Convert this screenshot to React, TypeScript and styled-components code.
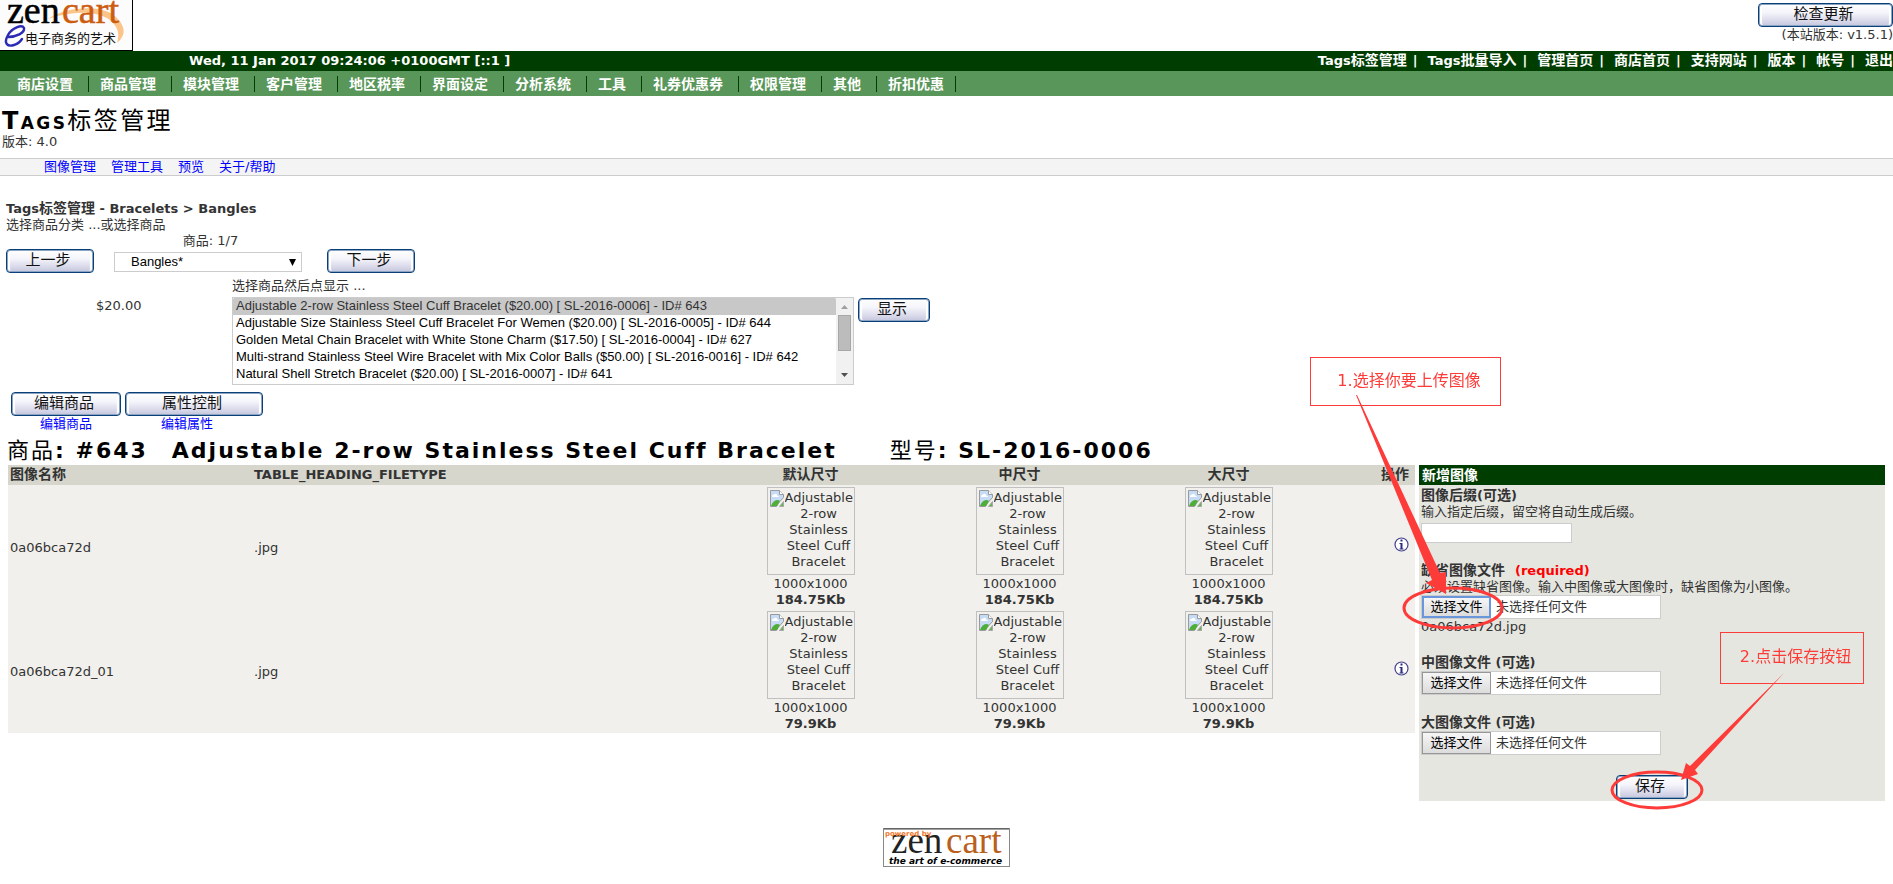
import React from 'react';
import styled, { createGlobalStyle } from 'styled-components';

const GlobalStyle = createGlobalStyle`
  * { box-sizing: border-box; }
  body {
    margin: 0;
    background: #fff;
    color: #333;
    font: 13px/16px "DejaVu Sans", "Noto Sans CJK SC", sans-serif;
  }
  a { color: #00f; text-decoration: none; }
`;

const Page = styled.div`
  position: relative;
  min-width: 1200px;
  overflow: hidden;
`;

const Header = styled.header`
  display: flex;
  justify-content: space-between;
  height: 51px;
`;

const Updates = styled.div`
  display: flex;
  flex-direction: column;
  align-items: flex-end;
  padding-top: 3px;
  white-space: nowrap;
`;

const ImageButton = styled.button<{ $width: number }>`
  width: ${p => p.$width}px;
  height: 24px;
  padding: 0 4px 2px 0;
  border: 1px solid #0b3f78;
  border-radius: 4px;
  background: linear-gradient(#fff 0%, #f4f4fb 40%, #d2d2e6 85%, #c4c4dc 100%);
  box-shadow: inset 0 0 0 1px #8aa4c4, inset 3px 0 1px #fff, inset -3px 0 1px #fff;
  color: #111;
  font: 15px/18px "DejaVu Sans", "Noto Sans CJK SC", sans-serif;
  white-space: nowrap;
`;

const InfoBar = styled.div`
  display: flex;
  justify-content: space-between;
  height: 20px;
  padding-left: 189px;
  background: #003d00;
  color: #fff;
  font-weight: bold;
  line-height: 20px;
  white-space: nowrap;
`;

const QuickNav = styled.nav`
  display: flex;
  gap: 10px;

  a { color: #fff; margin-right: 6px; }
  span:last-child > a { margin-right: 0; }
`;

const Han = styled.span`
  font-size: 14px;
  line-height: 1;
`;

const MenuBar = styled.nav`
  display: flex;
  align-items: center;
  height: 25px;
  padding-left: 6px;
  background: #599659;

  a {
    padding: 0 15px 0 11px;
    border-right: 1px solid #003d00;
    color: #fff;
    font-size: 14px;
    font-weight: bold;
  }
  a:last-child { padding-right: 11px; }
`;

const PageTitle = styled.h1`
  margin: 13px 0 0 2px;
  color: #000;
  font-size: 24px;
  font-variant: small-caps;
  letter-spacing: 0.1em;
  line-height: 25px;

  span { font-weight: normal; }
`;

const Version = styled.p`
  margin: 0 0 8px 2px;
`;

const SubMenu = styled.nav`
  display: flex;
  gap: 15px;
  height: 18px;
  padding-left: 44px;
  border: solid #ccc;
  border-width: 1px 0;
  background: #f4f4f4;
`;

const Picker = styled.section`
  padding: 25px 6px 0;
`;

const Crumb = styled.h2`
  margin: 0;
  font-size: 13px;
  line-height: 16px;
`;

const Line = styled.p`
  margin: 0;
`;

const Counter = styled.p`
  width: 409px;
  margin: 0;
  text-align: center;
`;

const StepRow = styled.div`
  display: flex;
  align-items: center;
  width: 409px;
  height: 24px;
  justify-content: space-between;
`;

const SelectBox = styled.div`
  position: relative;
  margin: 2px 5px 0 0;

  svg { position: absolute; right: 6px; top: 7px; pointer-events: none; }
`;

const Dropdown = styled.select`
  display: block;
  appearance: none;
  width: 188px;
  height: 20px;
  padding: 0 16px;
  border: 1px solid #ccc;
  border-radius: 0;
  background: #fff;
  color: #000;
  font: 13px/18px "Liberation Sans", sans-serif;
`;

const ProductRow = styled.div`
  display: grid;
  grid-template-columns: 226px 622px auto;
  justify-content: start;
  align-items: start;
  padding-top: 5px;

  label { grid-column: 2 / 4; margin-bottom: 3px; }
  button { margin: 1px 0 0 4px; }
`;

const Price = styled.span`
  padding: 1px 44px 0 90px;
`;

const ListFrame = styled.div`
  display: flex;
  height: 88px;
  border: 1px solid #ccc;
`;

const ProductList = styled.select`
  flex: 1;
  min-width: 0;
  height: 86px;
  padding: 0;
  border: 0;
  outline: 0;
  overflow: hidden;
  background: #fff;
  color: #000;
  font: 13px/17px "Liberation Sans", sans-serif;

  option {
    height: 17px;
    min-height: 17px;
    padding: 0 3px;
    line-height: 17px;
  }
  option:checked {
    background: #c8c8c8 linear-gradient(#c8c8c8, #c8c8c8);
    color: #333;
  }
`;

const ScrollTrack = styled.div`
  display: flex;
  flex-direction: column;
  align-items: center;
  width: 17px;
  background: #f1f1f1;
`;

const ScrollThumb = styled.div`
  width: 13px;
  height: 36px;
  border: 1px solid #a8a8a8;
  background: #bcbcbc;
`;

const Actions = styled.div`
  display: flex;
  gap: 4px;
  padding: 7px 11px 0;
`;

const Action = styled.div<{ $inset?: number }>`
  display: flex;
  flex-direction: column;
  align-items: center;
  line-height: 16px;

  a { padding-right: ${p => p.$inset || 0}px; }
`;

const ProductTitle = styled.h2`
  display: flex;
  gap: 53px;
  margin: 5px 0 0 7px;
  color: #000;
  font-size: 22px;
  letter-spacing: 2px;
  line-height: 28px;
  white-space: nowrap;

  i { font-style: normal; font-weight: normal; }
`;

const ProductName = styled.span`
  margin-left: 24px;
`;

const Columns = styled.main`
  display: grid;
  grid-template-columns: minmax(0, 1fr) 466px;
  gap: 4px;
  align-items: start;
  padding: 0 8px;
`;

const ImageTable = styled.table`
  width: 100%;
  border-collapse: collapse;
  table-layout: fixed;
  background: #f1f0ec;

  th {
    height: 20px;
    padding: 0 2px;
    background: #d6d6cc;
    text-align: left;
    line-height: 16px;
  }
  td { height: 124px; padding: 2px 2px 1px; }
  th.size, td.size { text-align: center; }
  td.size { vertical-align: top; }
  th.end, td.end { padding-right: 6px; text-align: right; }
  td.end { padding-bottom: 8px; }
`;

const Thumb = styled.div`
  display: flex;
  width: 88px;
  height: 88px;
  margin: 0 auto 1px;
  padding: 1px;
  border: 1px solid #c0c0c0;
  overflow: hidden;
  text-align: center;

  svg { flex: none; }
  span { flex: 1; min-width: 0; overflow: hidden; padding-top: 1px; }
`;

const IconLink = styled.a`
  display: inline-block;
  vertical-align: middle;
  svg { display: block; }
`;

const SidePanel = styled.form`
  background: #e6e6e0;
`;

const PanelHead = styled.h3`
  height: 20px;
  margin: 0;
  padding: 0 3px;
  background: #003d00;
  color: #fff;
  font-size: 14px;
  line-height: 20px;
`;

const PanelBody = styled.div`
  padding: 3px 2px 2px;
`;

const Field = styled.div`
  margin-bottom: 20px;

  > label { display: block; font-weight: bold; }
  em { margin-left: 10px; color: #f00; font-style: normal; }
`;

const SuffixInput = styled.input`
  display: block;
  width: 151px;
  height: 20px;
  margin-top: 3px;
  border: 1px solid #ccc;
  background: #fff;
`;

const FileFrame = styled.div`
  position: relative;
  display: flex;
  width: 240px;
  height: 24px;
  border: 1px solid #ccc;
  background: #fff;
  line-height: 22px;

  input { position: absolute; inset: 0; width: 100%; opacity: 0; }
`;

const FileButton = styled.span<{ $focus?: boolean }>`
  width: 69px;
  margin-right: 5px;
  border: ${p => (p.$focus ? '2px solid #6a96dc' : '1px solid #979797')};
  background: linear-gradient(#f6f6f6, #dcdcdc);
  color: #000;
  line-height: ${p => (p.$focus ? 18 : 20)}px;
  text-align: center;
`;

const SaveRow = styled.div`
  text-align: center;
  line-height: 0;
`;

const Footer = styled.footer`
  display: flex;
  justify-content: center;
  padding: 27px 0 17px;
`;

const Notes = styled.div`
  position: absolute;
  top: 0;
  right: 0;
  width: 600px;
  height: 820px;
  pointer-events: none;

  svg { position: absolute; inset: 0; }
`;

const Note = styled.div<{ $x: number; $y: number; $w: number; $h: number }>`
  position: absolute;
  left: ${p => p.$x}px;
  top: ${p => p.$y}px;
  width: ${p => p.$w}px;
  height: ${p => p.$h}px;
  padding-left: 7px;
  border: 1px solid #fd3b38;
  color: #fd3b38;
  font-size: 16px;
  line-height: ${p => p.$h - 4}px;
  text-align: center;
  white-space: nowrap;
`;

const menu = ['商店设置', '商品管理', '模块管理', '客户管理', '地区税率', '界面设定', '分析系统', '工具', '礼券优惠券', '权限管理', '其他', '折扣优惠'];
const quick: [string, string][] = [['Tags', '标签管理'], ['Tags', '批量导入'], ['', '管理首页'], ['', '商店首页'], ['', '支持网站'], ['', '版本'], ['', '帐号'], ['', '退出']];
const products = [
  'Adjustable 2-row Stainless Steel Cuff Bracelet ($20.00) [ SL-2016-0006] - ID# 643',
  'Adjustable Size Stainless Steel Cuff Bracelet For Wemen ($20.00) [ SL-2016-0005] - ID# 644',
  'Golden Metal Chain Bracelet with White Stone Charm ($17.50) [ SL-2016-0004] - ID# 627',
  'Multi-strand Stainless Steel Wire Bracelet with Mix Color Balls ($50.00) [ SL-2016-0016] - ID# 642',
  'Natural Shell Stretch Bracelet ($20.00) [ SL-2016-0007] - ID# 641',
];
const images = [
  { name: '0a06bca72d', size: '184.75Kb' },
  { name: '0a06bca72d_01', size: '79.9Kb' },
];

const Logo = () => (
  <svg width="133" height="51" viewBox="0 0 133 51" role="img" aria-label="Zen Cart">
    <rect x="-1" y="-1" width="133.5" height="51.5" fill="#fcfcfc" stroke="#000" />
    <path d="M48 19 C66 6 104 4 116 17 C128 29 124 37 117 43 C120 34 118 27 110 20 C96 10 70 11 48 19Z" fill="#fbc58a" />
    <text x="7" y="23" fontFamily="Liberation Serif" fontSize="38" fill="#000" stroke="#000" strokeWidth="0.5">zen</text>
    <text x="62" y="23" fontFamily="Liberation Serif" fontSize="38" fill="#cc5c10" stroke="#cc5c10" strokeWidth="0.5">cart</text>
    <path d="M8 37 C16 37 25 33 24 28 C22 24 12 28 8 35 C3 44 8 47 14 45 C18 44 20 42 22 39" fill="none" stroke="#2a2ab4" strokeWidth="2.4" strokeLinecap="round" />
    <text x="25" y="43" fontFamily="Noto Sans CJK SC" fontSize="13" fill="#111">电子商务的艺术</text>
  </svg>
);

const FooterLogo = () => (
  <svg width="127" height="39" viewBox="0 0 127 39" role="img" aria-label="Zen Cart, the art of e-commerce">
    <rect x="0.5" y="0.5" width="126" height="38" fill="#fff" stroke="#888" />
    <path d="M1 1H126" stroke="#444" strokeWidth="1" />
    <text x="8" y="25" fontFamily="Liberation Serif" fontSize="37" fill="#222">zen</text>
    <text x="63" y="25" fontFamily="Liberation Serif" fontSize="37" fill="#b9601c">cart</text>
    <text x="2" y="8" fontFamily="DejaVu Sans" fontWeight="bold" fontSize="7" fill="#f0782c">powered by</text>
    <text x="6" y="36" fontFamily="DejaVu Sans" fontWeight="bold" fontStyle="italic" fontSize="9" fill="#000">the art of e-commerce</text>
  </svg>
);

const BrokenIcon = () => (
  <svg width="16" height="19" viewBox="0 0 16 19" aria-hidden="true">
    <path d="M1.5 1.5H10.5L14.5 5.5V8.5L9.5 14L7.5 17.5H1.5Z" fill="#c6dcf6" stroke="#9a9a9a" />
    <path d="M10.5 1.5V5.5H14.5" fill="#fff" stroke="#9a9a9a" />
    <path d="M3 7.5a2 2 0 0 1 2-2a2 2 0 0 1 3.5 1.5q1.5 0 1.5 1H3Z" fill="#fff" />
    <path d="M2 17Q4 11.5 8 11Q10 11 11 12L8 17Z" fill="#4fae3a" />
    <path d="M10.5 17.5L14.5 12.5V17.5Z" fill="#5fb548" stroke="#a8a8a8" />
  </svg>
);

const InfoIcon = () => (
  <svg width="15" height="15" viewBox="0 0 15 15" aria-hidden="true">
    <circle cx="7.5" cy="7.5" r="6.5" fill="#fff" stroke="#45418c" strokeWidth="1.2" />
    <rect x="6.5" y="2.5" width="2" height="2" fill="#2e2a7c" />
    <path d="M5.5 6H8.5V11.5H9.5V12.5H5.5V11.5H6.5V7H5.5Z" fill="#2e2a7c" />
  </svg>
);

function FilePicker({ id, focus }: { id: string; focus?: boolean }) {
  return (
    <FileFrame>
      <FileButton $focus={focus}>选择文件</FileButton>
      <span>未选择任何文件</span>
      <input type="file" id={id} />
    </FileFrame>
  );
}

export default function App() {
  return (
    <Page>
      <GlobalStyle />
      <Header>
        <Logo />
        <Updates>
          <ImageButton type="button" $width={135}>检查更新</ImageButton>
          <span>(本站版本: v1.5.1)</span>
        </Updates>
      </Header>
      <InfoBar>
        <span>Wed, 11 Jan 2017 09:24:06 +0100GMT [::1 ]</span>
        <QuickNav>
          {quick.map(([latin, han], i) => (
            <span key={han}>
              <a href="#">{latin}<Han>{han}</Han></a>{i < quick.length - 1 && '|'}
            </span>
          ))}
        </QuickNav>
      </InfoBar>
      <MenuBar>{menu.map(m => <a href="#" key={m}>{m}</a>)}</MenuBar>

      <PageTitle>Tags<span>标签管理</span></PageTitle>
      <Version>版本: 4.0</Version>
      <SubMenu>
        {['图像管理', '管理工具', '预览', '关于/帮助'].map(t => <a href="#" key={t}>{t}</a>)}
      </SubMenu>

      <Picker>
        <Crumb>Tags<Han>标签管理</Han> - Bracelets &gt; Bangles</Crumb>
        <Line>选择商品分类 ...或选择商品</Line>
        <Counter>商品: 1/7</Counter>
        <StepRow>
          <ImageButton type="button" $width={88}>上一步</ImageButton>
          <SelectBox>
            <Dropdown aria-label="商品分类"><option>Bangles*</option></Dropdown>
            <svg width="7" height="7" viewBox="0 0 7 7" aria-hidden="true"><path d="M0 0H7L3.5 7Z" fill="#000" /></svg>
          </SelectBox>
          <ImageButton type="button" $width={88}>下一步</ImageButton>
        </StepRow>
        <ProductRow>
          <label htmlFor="products">选择商品然后点显示 ...</label>
          <Price>$20.00</Price>
          <ListFrame>
            <ProductList id="products" size={5} defaultValue={products[0]}>
              {products.map(p => <option key={p} value={p}>{p}</option>)}
            </ProductList>
            <ScrollTrack>
              <svg width="17" height="17" viewBox="0 0 17 17" aria-hidden="true"><path d="M5 11L8.5 7L12 11Z" fill="#a0a0a0" /></svg>
              <ScrollThumb />
              <svg width="17" height="33" viewBox="0 0 17 33" aria-hidden="true"><path d="M5 22L8.5 26L12 22Z" fill="#505050" /></svg>
            </ScrollTrack>
          </ListFrame>
          <ImageButton type="button" $width={72}>显示</ImageButton>
        </ProductRow>
      </Picker>

      <Actions>
        <Action><ImageButton type="button" $width={110}>编辑商品</ImageButton><a href="#">编辑商品</a></Action>
        <Action $inset={14}><ImageButton type="button" $width={138}>属性控制</ImageButton><a href="#">编辑属性</a></Action>
      </Actions>

      <ProductTitle>
        <span>
          <i>商品</i>: #643
          <ProductName>Adjustable 2-row Stainless Steel Cuff Bracelet</ProductName>
        </span>
        <span><i>型号</i>: SL-2016-0006</span>
      </ProductTitle>

      <Columns>
        <ImageTable>
          <colgroup>
            <col width="244" />
            <col />
            <col width="209" />
            <col width="209" />
            <col width="209" />
            <col width="82" />
          </colgroup>
          <thead>
            <tr>
              <th><Han>图像名称</Han></th>
              <th>TABLE_HEADING_FILETYPE</th>
              <th className="size"><Han>默认尺寸</Han></th>
              <th className="size"><Han>中尺寸</Han></th>
              <th className="size"><Han>大尺寸</Han></th>
              <th className="end"><Han>操作</Han></th>
            </tr>
          </thead>
          <tbody>
            {images.map(img => (
              <tr key={img.name}>
                <td>{img.name}</td>
                <td>.jpg</td>
                {[0, 1, 2].map(n => (
                  <td className="size" key={n}>
                    <Thumb><BrokenIcon /><span>Adjustable 2-row Stainless Steel Cuff Bracelet</span></Thumb>
                    1000x1000<br /><strong>{img.size}</strong>
                  </td>
                ))}
                <td className="end"><IconLink href="#" aria-label="信息"><InfoIcon /></IconLink></td>
              </tr>
            ))}
          </tbody>
        </ImageTable>

        <SidePanel>
          <PanelHead>新增图像</PanelHead>
          <PanelBody>
            <Field>
              <label htmlFor="suffix"><Han>图像后缀</Han>(<Han>可选</Han>)</label>
              <Line>输入指定后缀，留空将自动生成后缀。</Line>
              <SuffixInput id="suffix" type="text" />
            </Field>
            <Field>
              <label htmlFor="default-file"><Han>缺省图像文件</Han><em>(required)</em></label>
              <Line>必须设置缺省图像。输入中图像或大图像时，缺省图像为小图像。</Line>
              <FilePicker id="default-file" focus />
              <Line>0a06bca72d.jpg</Line>
            </Field>
            <Field>
              <label htmlFor="medium-file"><Han>中图像文件</Han> (<Han>可选</Han>)</label>
              <FilePicker id="medium-file" />
            </Field>
            <Field>
              <label htmlFor="large-file"><Han>大图像文件</Han> (<Han>可选</Han>)</label>
              <FilePicker id="large-file" />
            </Field>
            <SaveRow><ImageButton type="button" $width={72}>保存</ImageButton></SaveRow>
          </PanelBody>
        </SidePanel>
      </Columns>

      <Footer><FooterLogo /></Footer>

      <Notes>
        <Note $x={17} $y={357} $w={191} $h={49}>1.选择你要上传图像</Note>
        <Note $x={427} $y={632} $w={144} $h={52}>2.点击保存按钮</Note>
        <svg width="600" height="820" viewBox="1293 0 600 820" aria-hidden="true">
          <g fill="#fd3b38">
            <path d="M1356 395L1357 395L1440 573L1446 572L1446 594L1426 583L1432 580Z" />
            <path d="M1784 673L1695 770L1698 774L1681 780L1686 763L1690 766Z" />
          </g>
          <g fill="none" stroke="#fd3b38" strokeWidth="3">
            <ellipse cx="1453" cy="608" rx="49" ry="20" />
            <ellipse cx="1657" cy="790" rx="45" ry="18" />
          </g>
        </svg>
      </Notes>
    </Page>
  );
}
